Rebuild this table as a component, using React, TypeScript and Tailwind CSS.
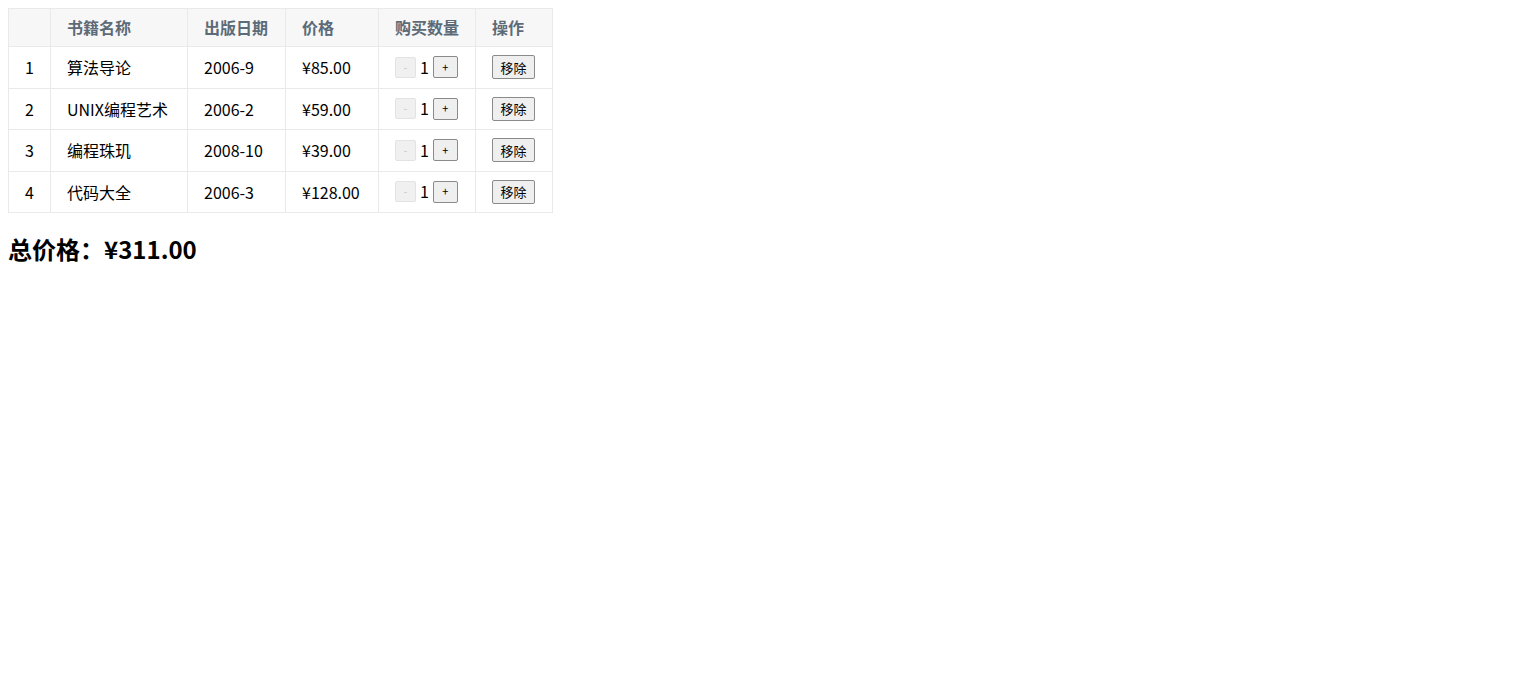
import { useState } from "react";

type Book = {
  id: number;
  name: string;
  date: string;
  price: number;
  count: number;
};

const initialBooks: Book[] = [
  { id: 1, name: "算法导论", date: "2006-9", price: 85, count: 1 },
  { id: 2, name: "UNIX编程艺术", date: "2006-2", price: 59, count: 1 },
  { id: 3, name: "编程珠玑", date: "2008-10", price: 39, count: 1 },
  { id: 4, name: "代码大全", date: "2006-3", price: 128, count: 1 },
];

const formatPrice = (price: number) => "¥" + price.toFixed(2);

export default function App() {
  const [books, setBooks] = useState<Book[]>(initialBooks);

  const total = books.reduce((sum, b) => sum + b.price * b.count, 0);

  const changeCount = (id: number, delta: number) => {
    setBooks(books.map(b => (b.id === id ? { ...b, count: b.count + delta } : b)));
  };

  const removeBook = (id: number) => {
    setBooks(books.filter(b => b.id !== id));
  };

  const cell = "whitespace-nowrap border border-[#e9e9e9] px-4 py-2 text-left leading-6";
  const head = `${cell} bg-[#f7f7f7] font-semibold leading-[21px] text-[#5c6b77]`;

  return (
    <div
      className="min-h-[700px] bg-white p-2 text-[16px] text-black"
      style={{ fontFamily: '"Noto Sans CJK SC", "Noto Sans", sans-serif' }}
    >
      {books.length ? (
        <table className="border border-[#e9e9e9]">
          <thead>
            <tr>
              <th className={`${head} w-[42px]`}></th>
              <th className={`${head} w-[137px]`}>书籍名称</th>
              <th className={`${head} w-[98px]`}>出版日期</th>
              <th className={`${head} w-[93px]`}>价格</th>
              <th className={`${head} w-[96px]`}>购买数量</th>
              <th className={`${head} w-[77px]`}>操作</th>
            </tr>
          </thead>
          <tbody>
            {books.map((book, index) => (
              <tr key={book.id} className="h-[41.5px]">
                <td className={cell}>{index + 1}</td>
                <td className={cell}>{book.name}</td>
                <td className={cell}>{book.date}</td>
                <td className={cell}>{formatPrice(book.price)}</td>
                <td className={cell}>
                  <div className="flex h-6 items-center">
                    <button
                      disabled={book.count <= 1}
                      onClick={() => changeCount(book.id, -1)}
                      className="h-[21px] w-[21px] rounded-[2px] border border-[#e3e3e3] bg-[#f0f0f0] text-[11px] leading-none text-[#c8c8c8] disabled:cursor-default"
                    >
                      -
                    </button>
                    <span className="mx-[4px] leading-[21px]">{book.count}</span>
                    <button
                      onClick={() => changeCount(book.id, 1)}
                      className="h-[22px] w-[25px] rounded-[2px] border border-[#8a8a8a] bg-[#efefef] text-[11px] leading-none text-black"
                    >
                      +
                    </button>
                  </div>
                </td>
                <td className={cell}>
                  <div className="flex h-6 items-center">
                    <button
                      onClick={() => removeBook(book.id)}
                      className="h-[24px] w-[43px] rounded-[2px] border border-[#8a8a8a] bg-[#efefef] text-[13px] leading-none text-black"
                    >
                      移除
                    </button>
                  </div>
                </td>
              </tr>
            ))}
          </tbody>
        </table>
      ) : (
        <h2>购物车为空</h2>
      )}
      <h2 className="mt-[20px] text-[24px] font-bold leading-[32px]">总价格：{formatPrice(total)}</h2>
    </div>
  );
}
